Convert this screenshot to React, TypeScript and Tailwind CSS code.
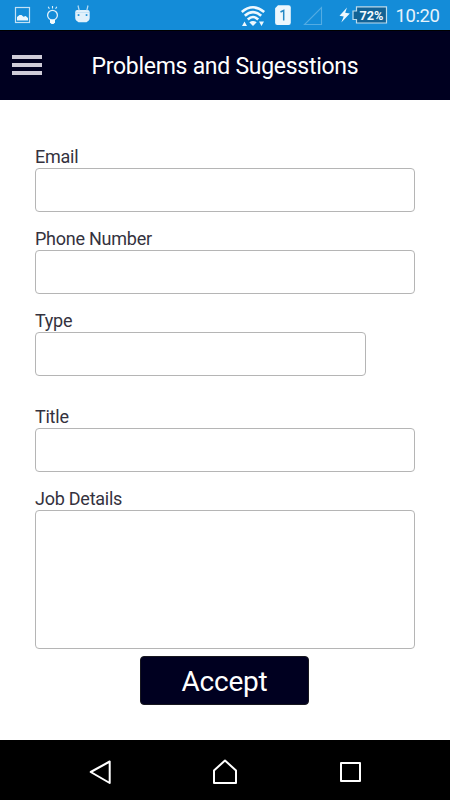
import React from "react";

function StatusBar() {
  return (
    <div className="flex h-[30px] w-full shrink-0 bg-[#148cd8] text-[#e6f3fb]">
      <svg className="h-[30px] w-[390px]" viewBox="0 0 390 30" fill="none">
        <g>
          <rect x="15.5" y="7.5" width="14" height="15" stroke="#c4e2f5" strokeWidth="1.2" />
          <path d="M17 20.500v-3.500l2.500-2h2l2 1.8 2.2-.8 2.300 2v2.500z" fill="#eaf6fd" />
        </g>
        <g stroke="#e0f1fb" strokeWidth="1.3">
          <circle cx="52.5" cy="15.2" r="4.9" />
          <path d="M50 19.500h5v3l-1.500 1.500h-2l-1.500-1.500z" fill="#f2fafe" stroke="none" />
          <path d="M52.5 6v2.4M48.2 6.700l1.200 2M56.800 6.700l-1.200 2" strokeWidth="1.100" />
        </g>
        <g>
          <path
            d="M75.200 12q0-2 2-2h10.500q2 0 2 2v6q0 1.500-1.200 2.700l-2 1.500h-8l-2-1.500q-1.300-1.200-1.300-2.700z"
            fill="#e2f1fb"
          />
          <path d="M78 5.500l1.200 5M88 5.500l-1.200 5" stroke="#b9dcf3" strokeWidth="1.200" />
          <path d="M76 12.500h13" stroke="#c5e2f5" />
          <rect x="77.700" y="14.200" width="1.700" height="1.700" fill="#148cd8" />
          <rect x="85.700" y="14.200" width="1.700" height="1.700" fill="#148cd8" />
        </g>
        <g stroke="#eef8fe" strokeWidth="2.600">
          <path d="M241.800 12Q253 2.500 264.200 12" />
          <path d="M244.800 15.800Q253 8.500 261.200 15.800" />
          <path d="M247.800 19.500Q253 14.500 258.200 19.500" />
          <path d="M249.300 22.200Q253 19.800 256.700 22.200L253 26z" fill="#eef8fe" stroke="none" />
          <path d="M242 26l2.500-4.500 2.500 4.500z M259 21.500h5l-2.500 4.500z" fill="#eef8fe" stroke="none" />
        </g>
        <path d="M278 5.300h10.500q2.300 0 2.300 2.200v15.300q0 2.200-2.200 2.200h-11.300q-2.200 0-2.200-2.200v-14.500z" fill="#edf7fd" />
        <path d="M280.500 12l3.200-1.500v10" stroke="#2588c5" strokeWidth="1.500" />
        <path d="M304.500 24.500h17v-17z" stroke="#53ace3" strokeWidth="1.100" />
        <path d="M347 7.500l-7.500 8.300 4.200.8-2.400 6 8.500-9-4.600-.8z" fill="#eef8fe" />
        <path
          d="M356.500 6.800h30v16.200h-30v-3.500h-3.500v-8.500h3.500z"
          fill="#126295"
          stroke="#bddced"
          strokeWidth="1.200"
        />
        <text
          x="359.500"
          y="19.600"
          fill="#f4faff"
          fontFamily="Roboto, sans-serif"
          fontSize="13"
          fontWeight="700"
          textLength="24"
          lengthAdjust="spacingAndGlyphs"
        >
          72%
        </text>
      </svg>
      <span className="ml-[5.500px] pt-[5px] text-[18.500px] leading-[22px] tracking-[-0.4px]">10:20</span>
    </div>
  );
}

function Header() {
  return (
    <header className="flex h-[70px] shrink-0 items-start border-t border-black bg-[#000020] pl-3">
      <button aria-label="Open menu" className="mt-6 flex w-[30px] flex-col gap-1">
        <span className="h-1 bg-[#cfccd8]" />
        <span className="h-1 bg-[#cfccd8]" />
        <span className="h-1 bg-[#cfccd8]" />
      </button>
      <h1 className="ml-[49.500px] mt-[22px] text-[23px] leading-7 tracking-[-0.28px] whitespace-nowrap text-white">
        Problems and Sugesstions
      </h1>
    </header>
  );
}

const control = "block resize-none rounded-[4px] border border-[#b5b5b5] bg-white px-2 outline-none";

function Field({ label, className, multiline }: { label: string; className: string; multiline?: boolean }) {
  return (
    <label className="block">
      <span className="block h-[22px] text-[18px] leading-[22px] tracking-[-0.25px] text-[#34323e]">{label}</span>
      {multiline ? (
        <textarea className={`${control} ${className}`} />
      ) : (
        <input className={`${control} ${className}`} />
      )}
    </label>
  );
}

function NavigationBar() {
  return (
    <nav className="h-[60px] shrink-0 bg-black">
      <svg className="h-[60px] w-[450px]" viewBox="0 0 450 60" fill="none" stroke="white" strokeWidth="2" strokeLinejoin="round">
        <path d="M109.700 21.500v21.500l-19-11z" />
        <path d="M225 20.500l11 10v12.500h-22v-12.500z" />
        <rect x="341" y="23" width="19" height="18" />
      </svg>
    </nav>
  );
}

export default function App() {
  return (
    <div className="flex h-[800px] w-[450px] flex-col overflow-hidden bg-white font-['Roboto',sans-serif]">
      <StatusBar />
      <Header />
      <form className="flex flex-1 flex-col px-[35px] pt-[46px]" onSubmit={(e) => e.preventDefault()}>
        <div className="flex flex-col gap-4">
          <Field label="Email" className="h-11 w-[380px]" />
          <Field label="Phone Number" className="h-11 w-[380px]" />
          <Field label="Type" className="h-11 w-[331px]" />
        </div>
        <div className="mt-[30px] flex flex-col gap-4">
          <Field label="Title" className="h-11 w-[380px]" />
          <Field label="Job Details" className="h-[139px] w-[380px]" multiline />
        </div>
        <button className="mt-[7px] ml-[105px] h-[49px] w-[169px] rounded-[4px] border border-[#17171e] bg-[#000020] pt-[3px] text-[28px] leading-8 tracking-[-0.25px] text-white">
          Accept
        </button>
      </form>
      <NavigationBar />
    </div>
  );
}
